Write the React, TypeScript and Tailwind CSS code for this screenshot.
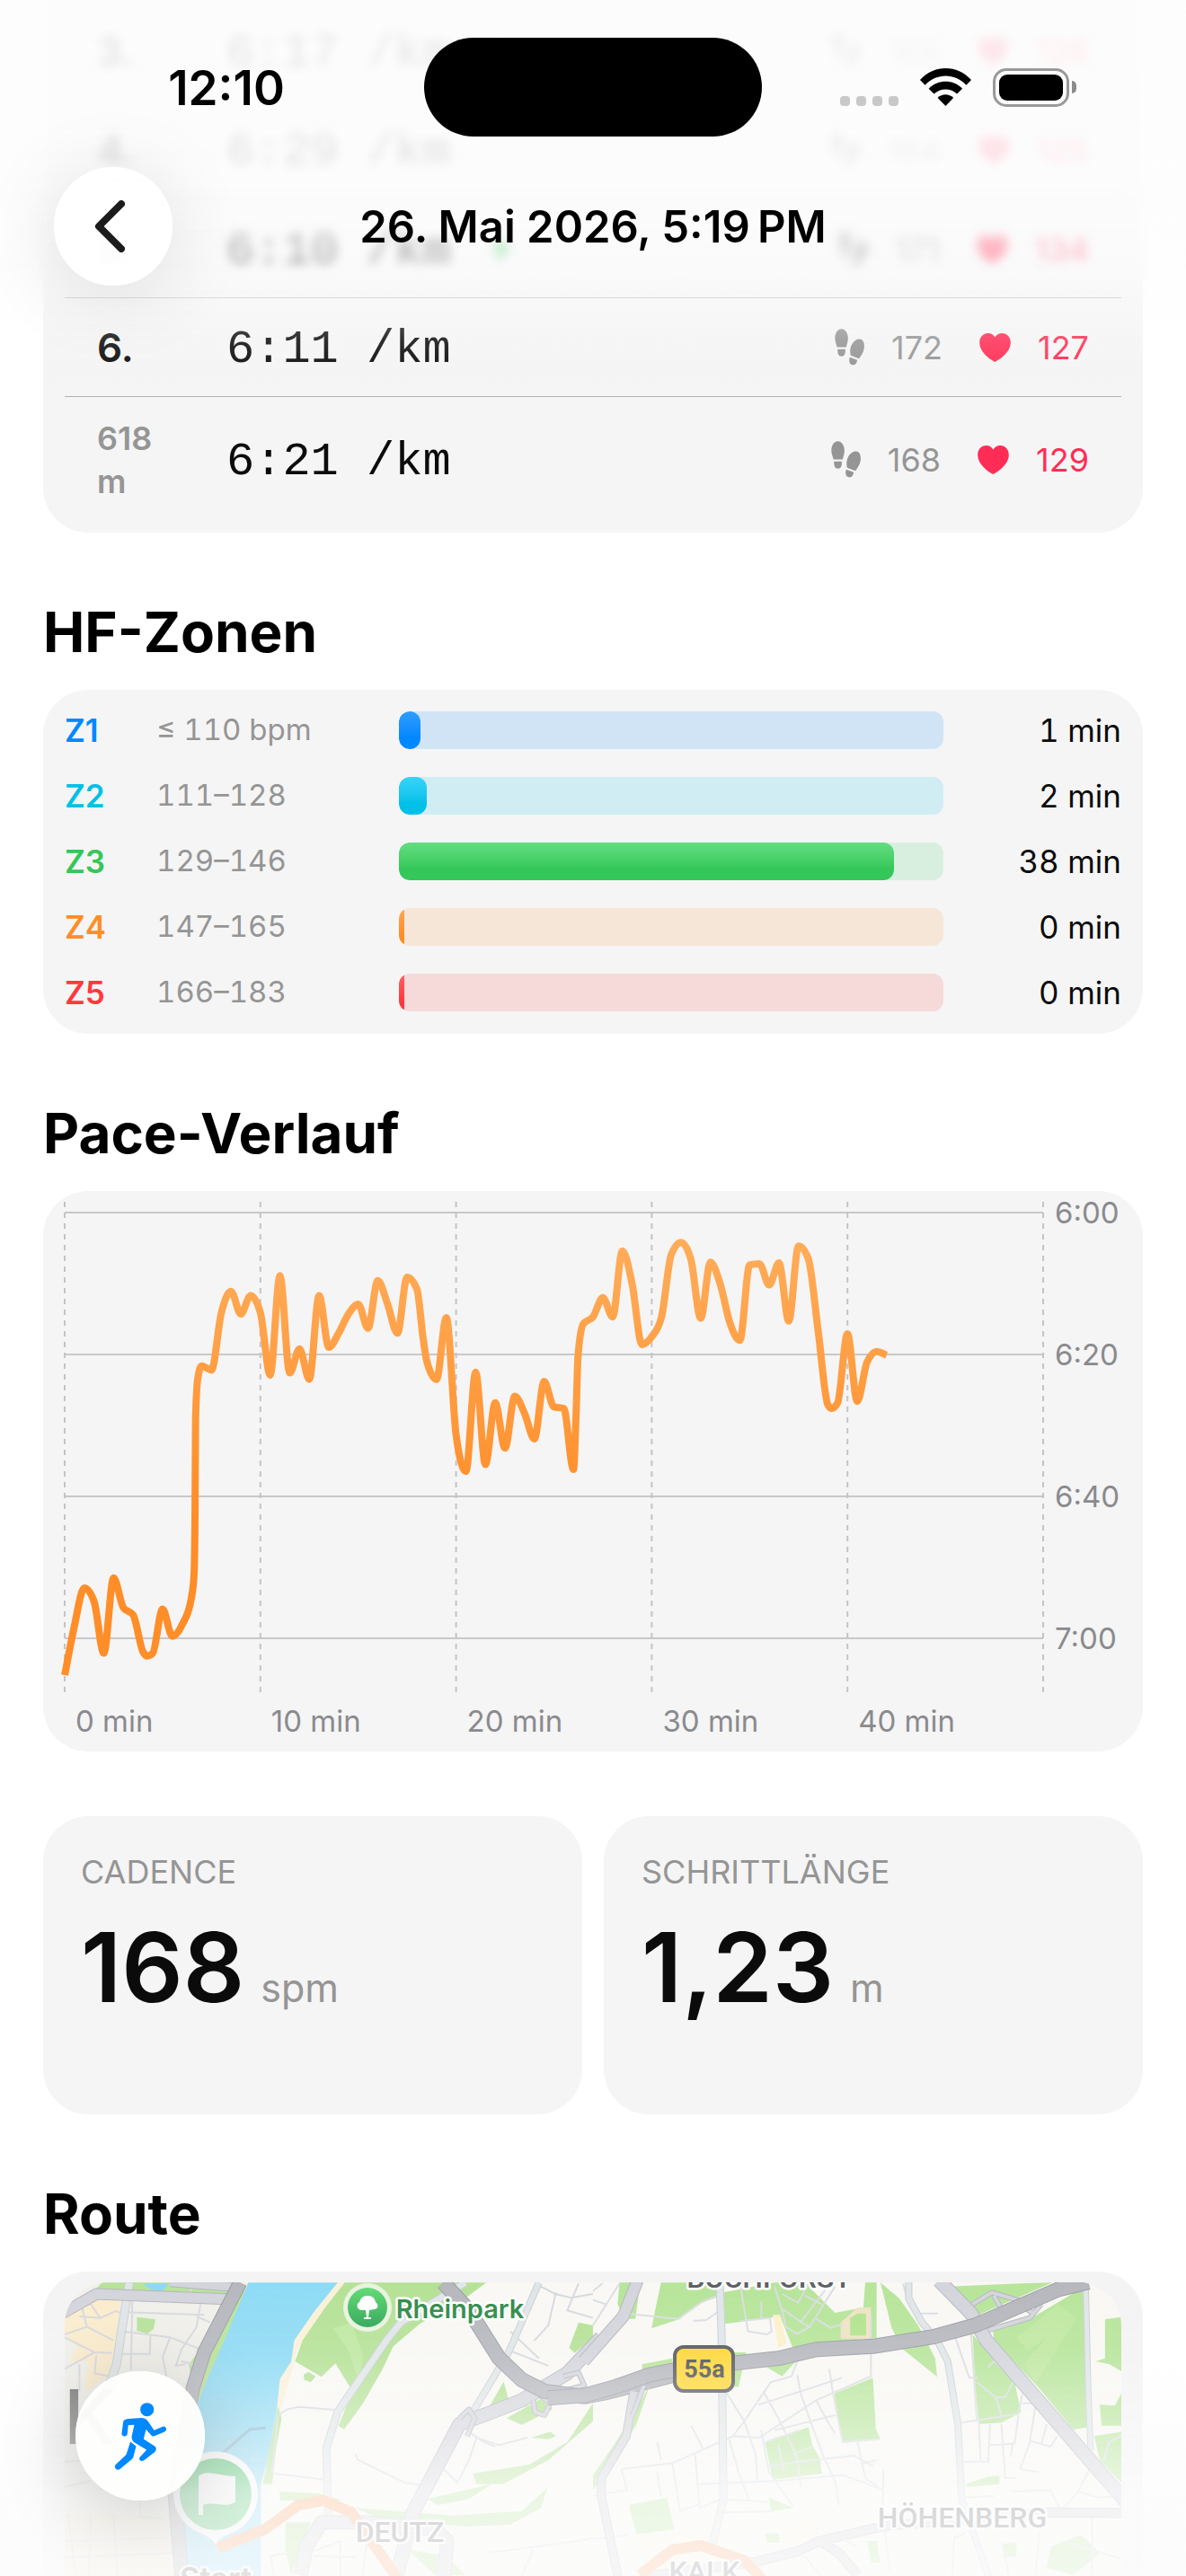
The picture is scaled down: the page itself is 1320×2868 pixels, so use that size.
import React from "react";

/* ---------- icons ---------- */

function Footprints() {
  return (
    <svg viewBox="56 46 100 124" className="h-[41px] w-[33px]" fill="currentColor" aria-hidden="true">
      <path d="M79 47C66 47 57 60 57 78C57 90 62 99 64 108H95C97 98 101 90 101 78C101 60 91 47 79 47Z" />
      <path d="M66 115H92C93 130 89 139 79 139C69 139 65 130 66 115Z" />
      <path d="M138 81C124 82 112 97 109 113C107 123 109 130 110 136L138 147C144 137 153 127 155 113C158 95 152 80 138 81Z" />
      <path d="M107 142L132 151C131 163 124 170 115 168C105 165 103 154 107 142Z" />
    </svg>
  );
}

function Heart() {
  return (
    <svg viewBox="540 62 105 97" className="h-8 w-[35px]" fill="currentColor" aria-hidden="true">
      <path d="M592 159C570 148 540 123 540 94C540 75 552 62 569 62C580 62 588 67 592 76C597 67 605 62 616 62C633 62 645 75 645 94C645 123 614 148 592 159Z" />
    </svg>
  );
}

function Bolt() {
  return (
    <svg viewBox="0 0 24 32" className="h-8 w-6" fill="currentColor" aria-hidden="true">
      <path d="M14 0L1 18H10L7 32L23 12H13Z" />
    </svg>
  );
}

function Wifi() {
  return (
    <svg viewBox="345 45 172 126" className="h-[42px] w-[57px]" aria-hidden="true">
      <path d="M345 84C392 32 470 32 517 84L500 101C462 60 400 60 362 101Z" />
      <path d="M374 113C405 81 457 81 487 113L469 131C450 110 412 110 392 131Z" />
      <path d="M404 144C419 129 442 129 457 144L431 171Z" />
    </svg>
  );
}

function Runner() {
  return (
    <svg viewBox="200 164 176 224" className="h-[75px] w-[59px]" fill="currentColor" aria-hidden="true">
      <circle cx="309.5" cy="187" r="22.5" />
      <path d="M246 218L290 215C300 215 308 219 313 227L333 256L361 244C372 240 378 254 369 260L337 274C331 277 326 277 322 271L306 253L298 285L335 309C341 313 341 322 335 328L299 356C289 363 279 353 286 345L308 321L268 297C260 291 257 283 259 274L267 238L247 239L244 268C242 278 227 279 225 268L230 230C231 222 236 219 246 218Z" />
      <path d="M254 294L273 309L264 344C263 348 261 350 258 353L220 384C209 393 197 379 205 370L240 337Z" />
    </svg>
  );
}

/* ---------- splits ---------- */

type Split = { label: string; pace: string; cadence: number; hr: number; fastest?: boolean; partial?: boolean };

const SPLITS: Split[] = [
  { label: "3.", pace: "6:17", cadence: 168, hr: 126 },
  { label: "4.", pace: "6:29", cadence: 164, hr: 125 },
  { label: "5.", pace: "6:10", cadence: 171, hr: 134, fastest: true },
  { label: "6.", pace: "6:11", cadence: 172, hr: 127 },
  { label: "618 m", pace: "6:21", cadence: 168, hr: 129, partial: true },
];

function SplitRow({ split }: { split: Split }) {
  return (
    <li
      className={
        split.partial
          ? "flex h-[139px] items-center px-9"
          : "flex h-[110px] items-center border-b border-[#b0b0b2] px-9"
      }
    >
      <span
        className={
          split.partial
            ? "w-24 text-[36px] leading-12 font-semibold text-[#959595]"
            : "w-24 text-[44px] leading-12 font-semibold"
        }
      >
        {split.label}
      </span>
      <span className="ml-12 pt-1.5 font-['Liberation_Mono',monospace] text-[52px] leading-[60px] whitespace-pre">
        {split.pace} /km
      </span>
      {split.fastest && (
        <span className="ml-11 text-[#34c759]">
          <Bolt />
        </span>
      )}
      <span className="ml-auto flex items-center gap-[30px] text-[36px] leading-12 text-[#959595]">
        <Footprints />
        {split.cadence}
      </span>
      <span className="ml-[41px] flex items-center gap-[30px] text-[36px] leading-12 text-[#ff2d55]">
        <Heart />
        {split.hr}
      </span>
    </li>
  );
}

/* ---------- heart rate zones ---------- */

const ZONES = [
  { name: "Z1", range: "≤ 110 bpm", min: 1, share: 4, text: "text-[#0088ff]", track: "bg-[#d0e4f6]", fill: "from-[#2c9dff] to-[#0088ff]" },
  { name: "Z2", range: "111–128", min: 2, share: 5.1, text: "text-[#00c0e8]", track: "bg-[#d0edf3]", fill: "from-[#34d4fa] to-[#00c0e8]" },
  { name: "Z3", range: "129–146", min: 38, share: 91, text: "text-[#34c759]", track: "bg-[#d8efdf]", fill: "from-[#63de82] to-[#34c759]" },
  { name: "Z4", range: "147–165", min: 0, share: 1, text: "text-[#ff8d28]", track: "bg-[#f6e6d7]", fill: "from-[#ffa854] to-[#ff8d28]" },
  { name: "Z5", range: "166–183", min: 0, share: 1, text: "text-[#ff383c]", track: "bg-[#f6d9d9]", fill: "from-[#ff6064] to-[#ff383c]" },
];

function HeartRateZones() {
  return (
    <ul className="flex flex-col gap-[31px] rounded-[50px] bg-[#f5f5f5] p-6 pb-[25px]">
      {ZONES.map((z) => (
        <li key={z.name} className="flex h-[42px] items-center">
          <span className={`w-[102px] text-[35px] font-semibold ${z.text}`}>{z.name}</span>
          <span className="w-[270px] text-[33px] text-[#959595] tabular-nums">{z.range}</span>
          <span className={`flex h-full flex-1 overflow-hidden rounded-xl ${z.track}`}>
            <span
              className={`h-full rounded-xl bg-linear-to-b to-70% ${z.fill}`}
              style={{ width: `${z.share}%` }}
            />
          </span>
          <span className="w-[198px] text-right text-[35px] text-[#0b0b0b] tabular-nums">{z.min} min</span>
        </li>
      ))}
    </ul>
  );
}

/* ---------- pace chart ---------- */

/* Pace in seconds per kilometre, one sample every half minute. */
const PACE_SECONDS = [
  425.2, 418.2, 412.9, 414.8, 422.1, 411.5, 415.7, 416.7, 421.9, 422.1, 415.9, 419.7, 418.1, 413.9, 381.6, 382.2,
  374.2, 371.1, 374.3, 371.7, 374.1, 382.9, 368.9, 382.6, 379.2, 383.5, 371.7, 379.0, 377.0, 374.3, 372.9, 376.3,
  369.6, 372.9, 377.0, 369.1, 370.8, 380.9, 383.5, 374.8, 391.3, 396.5, 382.5, 395.5, 386.8, 393.2, 385.9, 388.3,
  391.9, 383.8, 387.4, 387.6, 396.2, 375.7, 374.7, 372.0, 374.7, 365.4, 370.1, 378.6, 377.5, 374.7, 365.9, 364.2,
  366.6, 374.9, 367.0, 370.1, 375.6, 378.0, 367.4, 367.2, 370.2, 367.1, 375.3, 364.7, 366.5, 376.6, 387.1, 386.8,
  377.1, 386.6, 381.1, 379.6, 380.1,
];

/* Extra samples [minute, seconds] where the pace changes abruptly. */
const PACE_DETAIL: [number, number][] = [
  [4.22, 422.5],
  [6.61, 411],
  [6.66, 402.4],
  [6.69, 388.9],
  [6.8, 383.4],
  [18.32, 377.8],
  [26.14, 387.8],
  [26.23, 380.3],
  [39.2, 387.6],
];

const PLOT_W = 1089;
const PLOT_H = 546;

function plotPoints(): [number, number][] {
  const samples: [number, number][] = PACE_SECONDS.map((s, i) => [i / 2, s]);
  samples.push(...PACE_DETAIL);
  samples.sort((a, b) => a[0] - b[0]);
  return samples.map(([t, s]) => [(t / 50) * PLOT_W, 12 + (s - 360) * 7.9]);
}

/* Monotone cubic interpolation, so that peaks never overshoot the samples. */
function monotonePath(p: [number, number][]): string {
  const n = p.length;
  const h = p.slice(1).map((q, i) => q[0] - p[i][0]);
  const d = p.slice(1).map((q, i) => (q[1] - p[i][1]) / h[i]);
  const m = p.map((_, i) => {
    if (i === 0) return d[0];
    if (i === n - 1) return d[n - 2];
    const a = d[i - 1];
    const b = d[i];
    if (a * b <= 0) return 0;
    const mean = (a * h[i] + b * h[i - 1]) / (h[i] + h[i - 1]);
    return Math.sign(a) * Math.min(2 * Math.abs(a), 2 * Math.abs(b), Math.abs(mean));
  });
  let out = `M${p[0][0]} ${p[0][1]}`;
  for (let i = 0; i < n - 1; i++) {
    const k = h[i] / 3;
    out += `C${p[i][0] + k} ${p[i][1] + m[i] * k} ${p[i + 1][0] - k} ${p[i + 1][1] - m[i + 1] * k} ${p[i + 1][0]} ${p[i + 1][1]}`;
  }
  return out;
}

const PACE_PATH = monotonePath(plotPoints());

function PaceChart() {
  return (
    <div className="rounded-[50px] bg-[#f5f5f5] px-6 pt-3 pb-3.5 text-[33px] text-[#8a8a8e]">
      <div className="flex">
        <svg
          viewBox={`0 0 ${PLOT_W} ${PLOT_H}`}
          preserveAspectRatio="none"
          className="h-[546px] min-w-0 flex-1 overflow-visible"
          role="img"
          aria-label="Pace-Verlauf"
          fill="none"
        >
          <defs>
            <linearGradient id="pace" gradientUnits="userSpaceOnUse" x1="0" y1="20" x2="0" y2="350">
              <stop offset="0" stopColor="#ffaf5e" />
              <stop offset="1" stopColor="#ff8d28" />
            </linearGradient>
          </defs>
          {[0, 1, 2, 3].map((i) => (
            <path key={i} d={`M0 ${12 + i * 158}H${PLOT_W}`} stroke="#c8c8ca" strokeWidth="2" />
          ))}
          {[0, 1, 2, 3, 4, 5].map((i) => (
            <path
              key={i}
              d={`M${(i * PLOT_W) / 5} 0V${PLOT_H}`}
              stroke="#c4c4c6"
              strokeWidth="2"
              strokeDasharray="6 6"
            />
          ))}
          <path d={PACE_PATH} stroke="url(#pace)" strokeWidth="8" strokeLinejoin="round" />
        </svg>
        <div className="-mt-2 flex w-[87px] flex-col gap-[118px] pl-[13px] leading-10">
          <span>6:00</span>
          <span>6:20</span>
          <span>6:40</span>
          <span>7:00</span>
        </div>
      </div>
      <div className="mr-[87px] grid grid-cols-5 pt-3 leading-10">
        {[0, 10, 20, 30, 40].map((m) => (
          <span key={m} className="pl-3">
            {m} min
          </span>
        ))}
      </div>
    </div>
  );
}

/* ---------- metric tiles ---------- */

function Metric({ label, value, unit }: { label: string; value: string; unit: string }) {
  return (
    <div className="min-h-[332px] rounded-[50px] bg-[#f5f5f5] px-[42px] py-10">
      <dt className="text-[36px] leading-11 text-[#959595] uppercase">{label}</dt>
      <dd className="mt-5 flex items-baseline gap-[18px] leading-32">
        <span className="text-[107px] font-semibold text-[#0b0b0b]">{value}</span>
        <span className="text-[43px] text-[#959595]">{unit}</span>
      </dd>
    </div>
  );
}

/* ---------- route map ---------- */

const LEFT_STREETS =
  "M171 600L230 575L300 620M171 610L250 660L171 715M250 660L295 662M210 540L265 545L310 520M230 575L215 500M265 545L235 490M310 525L540 535M350 480L346 720M325 590L450 610L530 650M398 600L396 665L315 665M450 610L430 675L440 740M530 500L520 575L480 650L465 705L490 700M480 690L530 705M520 540L555 560M171 1025L230 1020L250 1060M171 1110L240 1090M180 1200L200 1400M240 1210L235 1404M300 1200L310 1404M171 1290L440 1280M171 1345L460 1330M370 1150V1210L430 1215M490 480L515 430M210 700V790M255 670L250 730L290 740M725 1065L860 1085M735 870L760 850L790 842L885 852M735 870L720 1060M940 1000L945 1018L1070 1095L1118 1105M1165 1040L1210 1095L1240 1020L1260 945L1320 970L1395 945M1245 930L1280 960L1310 975M1340 650L1450 705M1350 590L1425 680M1470 460L1450 570L1412 622M1430 440L1468 465L1510 478L1568 465M1530 430L1500 520L1568 545M725 1404L715 1340L770 1328M830 1325L900 1290V1404M830 1340L940 1345M970 1290L960 1404M1290 1330L1410 1310L1530 1290L1568 1280M1380 1404L1410 1320";

const RIGHT_STREETS =
  "M0 485L35 500L70 430M0 570L35 500M0 455L25 430M85 530L225 548L290 490L330 470M265 555L300 552L330 525M390 440L410 590L460 600L472 590L468 545L390 555M445 490V545M480 440L500 520L510 575L540 598L572 575L640 440M500 515L550 558L615 450M500 465L542 495L570 430M572 575L545 555M590 548L628 578L660 565M560 470L605 500M540 690L525 740L470 760L400 890L370 940L210 1030L75 1050M735 535V740L590 820L440 945L370 940M437 835L550 790L658 745M625 715L635 800L660 960M540 735L550 800L575 890L610 1010M590 820L620 890L640 930M450 790L490 880L540 1010L550 1110M350 790L400 890L430 1000L435 1090M480 920L640 870M455 960L545 920M530 1000L580 975M360 950L385 1060L415 1160M445 920L465 1060L530 1175M660 960L755 950M465 1040L545 1025L690 1005L740 1040M610 1010L640 1090L650 1170M700 960L720 1080L765 1120M280 1100L480 1090L660 1070L765 1118M270 1000L282 1180L340 1150L460 1160M210 1030L230 1190L285 1165M75 1050L90 1120L0 1140M170 960L180 1020M260 905L290 980M170 1060L180 1140M490 970L505 1060M340 1195L480 1190M768 1050L765 1240M715 1030L750 1020M865 530H912M958 610L995 745H1018M1000 600L1015 890M1015 760L1065 810L1080 870M1045 710L1060 690L1115 750L1090 810H1065M975 895L1125 865L1135 800M1020 890L1025 1020M975 1025H1045L1050 900M1080 900L1090 1080H1120M1125 870L1115 965L1050 970M1170 840L1155 960L1130 1050L1178 1060M1155 955L1210 975L1228 940M1200 900L1185 970M980 1145L1060 1140M1110 1125L1210 1120L1235 1185M1330 1010L1280 1130L1240 1185M1280 1125L1340 1145L1400 1140M1350 1020L1365 960L1400 935M1110 960L1105 1010M1135 830H1170M0 1285L95 1270M770 1240L785 1390M950 1404L955 1280L985 1265M1080 1290L1100 1404M1180 1260L1170 1404M1320 1200V1404M1240 1290L1400 1350M560 1340L600 1404M670 1290L700 1310M820 430L830 480";

type RoadProps = { d: string; w: number; color: string; edge: string };

function Road({ d, w, color, edge }: RoadProps) {
  return (
    <g fill="none" strokeLinejoin="round">
      <path d={d} stroke={edge} strokeWidth={w + 2} vectorEffect="non-scaling-stroke" />
      <path d={d} stroke={color} strokeWidth={w} vectorEffect="non-scaling-stroke" />
    </g>
  );
}

const MOTORWAY = { color: "#b6b8be", edge: "#9a9ca3" };
const MAJOR = { color: "#d4d5dc", edge: "#b4b6be" };
const MINOR = { color: "#e0e6e8", edge: "#c9cfd2" };

function RouteMap() {
  return (
    <svg viewBox="0 0 1176 600" className="block w-full" role="img" aria-label="Karte der Route">
      <defs>
        <linearGradient id="badge" x1="0" y1="0" x2="0" y2="1">
          <stop offset="0" stopColor="#62db76" />
          <stop offset="1" stopColor="#2ba552" />
        </linearGradient>
      </defs>
      <rect width="1176" height="600" fill="#f9f8f4" />

      {/* western half: river, Rheinpark, Deutz */}
      <g transform="translate(-72 -142) scale(.42088 .33333)">
        <path fill="#f1f0ea" d="M171 427H650L460 1130L480 2300H171Z" />
        <path fill="#fbeccc" d="M171 520L255 482H318L300 720L240 782H222L235 690H185L205 640L171 600Z" />
        <path fill="#f4ebd6" d="M171 1200H455L475 1404V2300H171Z" />
        <g fill="#b8e39b">
          <path d="M270 427H622L605 470L250 452Z" />
          <path d="M362 542L411 550L406 582L390 598L362 588Z" />
          <path d="M654 427L612 600L560 740L512 850L500 700Z" />
        </g>
        <path fill="#8fd8f2" d="M380 430H446L440 442L428 456L398 450Z" />
        <path fill="#8edbf5" d="M657 427H895L830 530L785 640L770 700L745 780L725 900L710 1010L690 1100V2300H500L455 1130L520 840L545 760L600 600Z" />
        <path fill="#faf1d8" d="M893 427H914L870 510L832 580L785 650L768 740L748 830L728 900L740 750L770 690L778 620L830 525Z" />
        <g fill="#b5e296">
          <path d="M912 427H1286L1240 470L1110 565L1040 640L1010 720L960 830L910 917L895 905L932 790L887 697L850 742L780 690L800 620L860 510Z" />
          <path d="M803 735L815 725L835 740L822 760L805 752Z" />
          <path d="M735 840L745 880L730 980L720 1100H695L710 1000Z" />
          <path d="M1530 560L1568 570V610L1520 662L1505 645Z" />
          <path d="M1332 758L1345 818L1290 850Z" />
          <path d="M1340 880L1430 815L1462 850L1380 902Z" />
          <path d="M1310 710L1318 740L1280 815Z" />
          <path d="M740 1125L840 1130L910 1155H740ZM755 1228H822L790 1330L770 1404L755 1320Z" />
          <path d="M1250 1065L1400 1035L1500 960L1568 830V890L1450 1020L1330 1100H1260Z" />
          <path d="M1405 945L1455 925L1470 940L1450 950Z" />
          <path d="M1130 1150L1300 1100L1240 1150L1160 1170ZM940 1180L1200 1205L1380 1190L1448 1112L1430 1180L1350 1235L1230 1242L1000 1215Z" />
          <path d="M1080 1320L1180 1340L1230 1404H1150Z" />
        </g>
        <path fill="#bfe8a2" d="M880 580L930 560L960 670L950 760L920 650Z" />
        <path fill="none" stroke="#d6d9de" strokeWidth="2" vectorEffect="non-scaling-stroke" d={LEFT_STREETS} />
        <path fill="none" stroke="#87b6cf" strokeWidth="3" vectorEffect="non-scaling-stroke" d="M590 995L660 918L703 912" />
        <Road {...MINOR} w={8} d="M342 427L330 520L308 700L280 800" />
        <Road {...MAJOR} w={9} d="M450 425L615 442" />
        <Road {...MAJOR} w={11} d="M165 530L255 465L600 482" />
        <Road {...MINOR} w={7} d="M1230 427L1060 560L1022 620L893 858L863 980L868 1220" />
        <Road {...MINOR} w={6} d="M1425 427L1345 660L1240 880" />
        <Road {...MOTORWAY} w={14} d="M635 427L540 660L510 780L462 1130L480 1404V2300" />
        <Road {...MAJOR} w={14} d="M1590 610L1500 730L1380 820L1300 860L1215 900L1140 1080L1090 1200L1050 1404V2300" />
        <Road {...MAJOR} w={4} d="M1490 740L1530 728L1545 770L1500 785M1410 820L1415 860L1440 870L1455 830L1425 800M1215 880L1240 850L1255 880L1235 940" />
        <Road {...MAJOR} w={14} d="M795 1404L810 1310L850 1228L960 1228L1150 1250L1182 1290L1175 1404V2300" />
        <Road {...MOTORWAY} w={15} d="M1172 427L1240 520L1320 680L1380 752L1440 790L1545 808L1600 795L1800 730" />
      </g>

      {/* eastern half: Buchforst, Kalk, Höhenberg */}
      <g transform="translate(588 -142) scale(.42088 .33333)">
        <g fill="#b7e59a">
          <path d="M70 427H125L112 548H85L65 500Z" />
          <path d="M180 427H330V475L275 500L230 548L155 580L165 515Z" />
          <path d="M345 460L480 427H560L640 528L715 510L720 427H750V612L580 630L500 740L460 710L530 650L495 540L350 565Z" />
          <path d="M760 427L810 480L860 570L905 680L910 742L820 650L790 580Z" />
          <path d="M940 440L1130 430L1215 427L1010 540Z" />
          <path d="M1058 590L1160 545L1300 440L1310 910L1270 918L1180 780L1060 620Z" />
          <path d="M1004 600L1115 760L1132 860L1080 895L1020 900L1010 760Z" />
          <path d="M1354 550L1400 542V725L1366 700L1330 690L1354 680Z" />
          <path d="M638 797L740 745L748 915L760 950L660 962Z" />
          <path d="M455 960L570 910L580 970L600 1015L605 1065L475 1085Z" />
          <path d="M1325 940L1400 925V1100L1340 1020Z" />
          <path d="M1340 835L1380 838L1400 790V905L1345 905Z" />
          <path d="M95 1170L195 1145L215 1250L115 1268ZM465 1145L530 1180L470 1190ZM985 1100L1045 1075L1075 1072V1100L990 1110Z" />
          <path d="M1210 1310L1290 1270L1340 1330L1270 1404L1200 1380ZM1085 1300L1120 1295V1340L1085 1345ZM725 1290L750 1290L760 1365L735 1360ZM455 1265H492V1295H460Z" />
          <path d="M130 700L210 680V705L130 745ZM370 660H405L385 775H345Z" />
          <path d="M150 770L115 900L65 1010L0 1120V1070L60 960L100 880Z" />
        </g>
        <path fill="#cdeead" d="M1120 610L1230 500L1280 545L1170 765L1140 700L1200 610L1150 655Z" opacity=".4" />
        <path fill="#fdf0cf" d="M475 535H495L512 630L490 645Z" />
        <path fill="#efe3c4" d="M655 560L700 510H735V614H655Z" />
        <path fill="#b2e48e" d="M680 545L700 530H722V604H680Z" />
        <path fill="#fff6e3" d="M100 1268L340 1270L330 1404H180ZM500 1260L580 1200L600 1250L560 1330L500 1310Z" />
        <path fill="none" stroke="#dadde2" strokeWidth="2" vectorEffect="non-scaling-stroke" d={RIGHT_STREETS} />
        <Road {...MINOR} w={7} d="M335 427L340 600L345 1150L310 1330" />
        <Road {...MINOR} w={6} d="M835 427V480L870 560L910 620L938 690L965 900L975 1150L1045 1404V2300" />
        <Road {...MINOR} w={5} d="M1303 435L1310 800L1316 990" />
        <Road {...MAJOR} w={8} d="M108 790L88 940L22 1080V1140L65 1404V2300" />
        <Road {...MAJOR} w={4} d="M135 770L105 870M990 510L1055 460L1140 492M1060 470L1080 515M1040 588L1155 545L1185 500M1140 510L1165 530" />
        <Road {...MAJOR} w={12} d="M118 420L80 540L-25 690" />
        <Road {...MAJOR} w={14} d="M915 420L1000 530L1040 620L1410 1160" />
        <Road {...MAJOR} w={9} d="M130 1410L430 1360L540 1325L600 1290L770 1240L1200 1195L1410 1197M600 1290L650 1330L700 1404" />
        <Road {...MOTORWAY} w={15} d="M-120 812L-20 803L60 775L150 735L220 718L380 695L490 680L590 650L740 640L900 608L1010 570L1230 450L1310 425" />
      </g>

      {/* recorded track */}
      <path
        d="M170 296L223 275L260 248L288 243L319 256L332 275L368 326V500M640 326L676 298L708 293L757 310L785 340V500"
        fill="none"
        stroke="#ffa266"
        strokeWidth="12"
        strokeLinejoin="round"
      />

      {/* start pin */}
      <path d="M168 293C164 282 152 281 146 277A47 47 0 1 1 190 277C184 281 172 282 168 293Z" fill="#fff" />
      <circle cx="168" cy="236" r="40" fill="#45c768" />
      <path d="M150 258V216C160 209 172 217 189 217V244C178 251 164 242 153 247V258Z" fill="#fff" stroke="#fff" strokeWidth="2" />

      {/* park badge */}
      <circle cx="337" cy="28" r="27" fill="#e9f3df" />
      <circle cx="337" cy="28" r="22" fill="url(#badge)" />
      <path d="M337 15C330 15 329 20 328 22C324 24 325 30 330 31L335 31L336 39H333V41H341V39H338L339 31L345 30C350 29 349 24 346 22C345 18 343 15 337 15Z" fill="#fff" />

      {/* road shield */}
      <rect x="679" y="72" width="65" height="49" rx="10" fill="#ffd735" stroke="#55585c" strokeWidth="4" />

      <g fontFamily="Roboto, sans-serif" fontWeight="500" textAnchor="middle" fill="#5d6064" stroke="#fff" strokeWidth="5" strokeLinejoin="round" paintOrder="stroke">
        <text x="784" y="6" fontSize="32">BUCHFORST</text>
        <text x="373" y="289" fontSize="32">DEUTZ</text>
        <text x="999" y="273" fontSize="32">HÖHENBERG</text>
        <text x="712" y="333" fontSize="32">KALK</text>
        <text x="168" y="342" fontSize="34" fontFamily="Inter, sans-serif" fontWeight="600">Start</text>
        <text x="440" y="40" fontSize="29" fontFamily="Inter, sans-serif" fontWeight="600" fill="#2f8a48">Rheinpark</text>
      </g>
      <text x="712" y="106" fontSize="27" fontFamily="Roboto, sans-serif" fontWeight="700" textAnchor="middle" fill="#4d5054">55a</text>
      <text x="-1" y="180" fontSize="84" fontFamily="Inter, sans-serif" fontWeight="500" fill="#6a6a6a">K</text>
    </svg>
  );
}

/* ---------- page ---------- */

function SectionTitle({ children }: { children: React.ReactNode }) {
  return <h2 className="mt-[71px] mb-6 text-[62px] leading-20 font-bold text-black">{children}</h2>;
}

function TopBar() {
  return (
    <header className="fixed inset-x-0 top-0 z-10">
      <div className="absolute inset-x-0 top-0 h-[345px] mask-b-from-85% mask-b-to-100% backdrop-blur-[6px]" />
      <div className="absolute inset-x-0 top-0 h-[430px] bg-[linear-gradient(to_bottom,rgba(253,253,253,0.9)_0,rgba(253,253,253,0.88)_45%,rgba(253,253,253,0.7)_62%,rgba(253,253,253,0.5)_75%,rgba(253,253,253,0.15)_88%,rgba(253,253,253,0)_100%)]" />

      <div className="relative grid h-[152px] grid-cols-[1fr_376px_1fr] pt-[42px]">
        <time className="pt-6 pl-8 text-center text-[53px] leading-16 font-semibold text-black">12:10</time>
        <div className="h-[110px] rounded-full bg-black" />
        <div className="flex h-[110px] items-center justify-end pr-[122px]">
          <span className="mr-6 flex gap-[7px] pt-[31px]" aria-hidden="true">
            {[0, 1, 2, 3].map((i) => (
              <span key={i} className="size-[11px] rounded-sm bg-[#c8c8c8]" />
            ))}
          </span>
          <Wifi />
          <span className="ml-6 flex h-[43px] w-[85px] rounded-[15px] border-[3px] border-[#999] p-1">
            <span className="flex-1 rounded-[9px] bg-black" />
          </span>
          <span className="ml-[3px] h-[14px] w-[5px] rounded-r-full bg-[#8c8c8c]" />
        </div>
      </div>

      <div className="relative mt-[34px] grid grid-cols-[132px_1fr_132px] px-[60px]">
        <button
          type="button"
          aria-label="Zurück"
          className="flex size-[132px] items-center justify-center rounded-full border-2 border-white bg-white/95 shadow-[0_10px_90px_rgba(0,0,0,0.12)]"
        >
          <svg viewBox="0 0 34 58" className="mr-2 h-[58px] w-[34px]" fill="none" stroke="#1c1c1c" strokeWidth="8" strokeLinecap="round" strokeLinejoin="round">
            <path d="M30 4L5 29L30 54" />
          </svg>
        </button>
        <h1 className="pt-[35px] text-center text-[49px] leading-16 font-semibold whitespace-nowrap text-black">
          26. Mai 2026, 5:19{"\u202F"}PM
        </h1>
      </div>
    </header>
  );
}

export default function App() {
  return (
    <div className="relative h-screen overflow-hidden bg-white font-[Inter,sans-serif] text-[#0b0b0b]">
      <main className="px-12">
        <ol className="rounded-b-[50px] bg-[#f5f5f5] px-6 pt-0.5 pb-3">
          {SPLITS.map((s) => (
            <SplitRow key={s.label} split={s} />
          ))}
        </ol>

        <SectionTitle>HF-Zonen</SectionTitle>
        <HeartRateZones />

        <SectionTitle>Pace-Verlauf</SectionTitle>
        <PaceChart />

        <dl className="mt-[72px] grid grid-cols-2 gap-6">
          <Metric label="Cadence" value="168" unit="spm" />
          <Metric label="Schrittlänge" value="1,23" unit="m" />
        </dl>

        <SectionTitle>Route</SectionTitle>
        <div className="rounded-[50px] bg-[#f4f4f4] px-6 py-3">
          <div className="overflow-hidden rounded-[48px]">
            <RouteMap />
          </div>
        </div>
      </main>

      <TopBar />

      <div className="pointer-events-none fixed inset-x-0 bottom-0 h-[330px] bg-[linear-gradient(to_bottom,rgba(252,252,252,0)_0,rgba(252,252,252,0.12)_25%,rgba(252,252,252,0.42)_48%,rgba(252,252,252,0.76)_72%,rgba(252,252,252,0.84)_100%)]" />
      <button
        type="button"
        aria-label="Lauf"
        className="fixed bottom-[84px] left-[84px] flex size-36 items-center justify-center rounded-full border-2 border-white bg-[#fefefc]/95 text-[#0088ff] shadow-[0_12px_90px_rgba(0,0,0,0.2)]"
      >
        <Runner />
      </button>
    </div>
  );
}
